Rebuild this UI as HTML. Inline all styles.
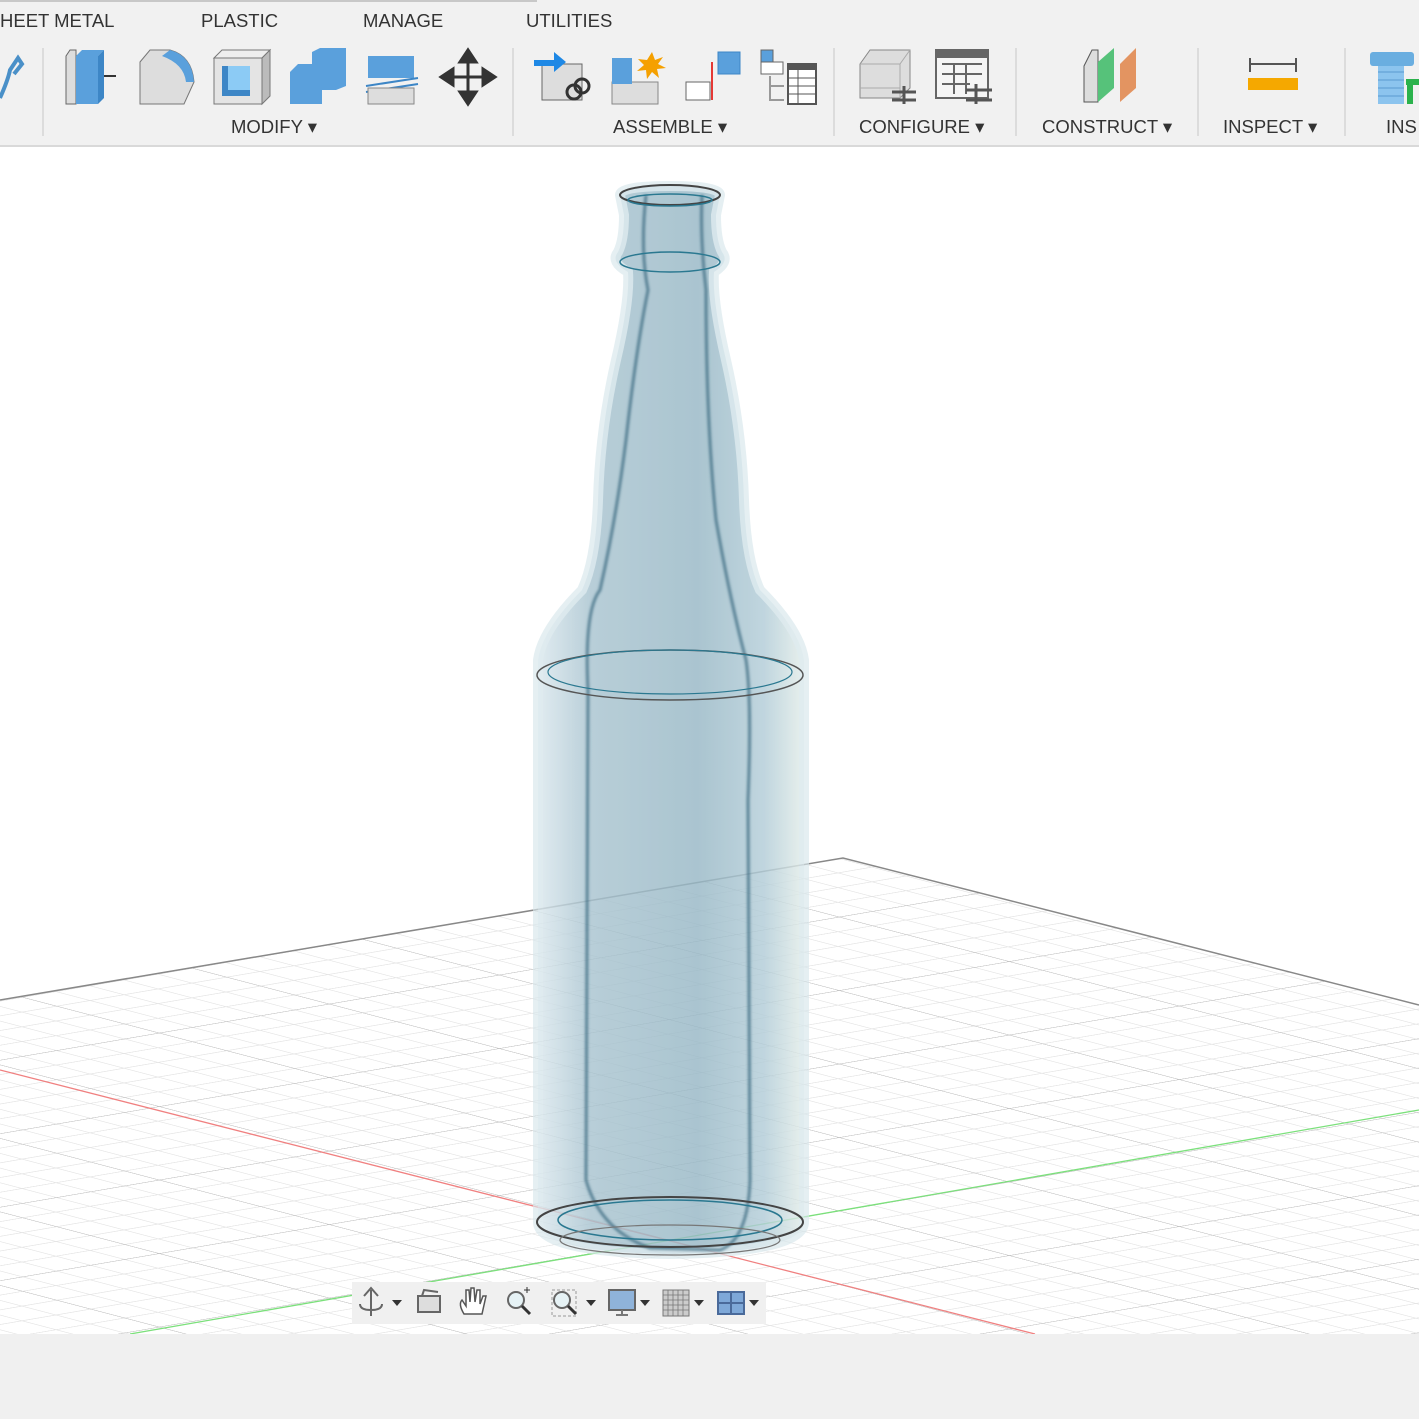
<!DOCTYPE html>
<html><head><meta charset="utf-8"><style>
html,body{margin:0;padding:0;width:1419px;height:1419px;overflow:hidden;background:#f0f0f0;font-family:"Liberation Sans",sans-serif}
#tb{position:absolute;left:0;top:0;width:1419px;height:145px;background:#f1f1f1;border-bottom:2px solid #d9d9d9}
.tab{position:absolute;top:10px;font-size:18.5px;color:#333}
.grp{position:absolute;top:116px;font-size:18.5px;color:#333}
.sep{position:absolute;top:48px;width:2px;height:88px;background:#dcdcdc}
#vp{position:absolute;left:0;top:147px;width:1419px;height:1187px;background:#fff;overflow:hidden}
#nav{position:absolute;left:352px;top:1282px;width:414px;height:42px;background:#f0f0f0}
</style></head><body>
<div id="tb">
<div style="position:absolute;left:0;top:0;width:537px;height:2px;background:#c8c8c8"></div>
<div class="tab" style="left:0">HEET METAL</div>
<div class="tab" style="left:201px">PLASTIC</div>
<div class="tab" style="left:363px">MANAGE</div>
<div class="tab" style="left:526px">UTILITIES</div>
<div class="grp" style="left:231px">MODIFY ▾</div>
<div class="grp" style="left:613px">ASSEMBLE ▾</div>
<div class="grp" style="left:859px">CONFIGURE ▾</div>
<div class="grp" style="left:1042px">CONSTRUCT ▾</div>
<div class="grp" style="left:1223px">INSPECT ▾</div>
<div class="grp" style="left:1386px">INS</div>
<div class="sep" style="left:42px"></div><div class="sep" style="left:512px"></div><div class="sep" style="left:833px"></div><div class="sep" style="left:1015px"></div><div class="sep" style="left:1197px"></div><div class="sep" style="left:1344px"></div>
<svg width="1419" height="110" style="position:absolute;left:0;top:0">
<path d="M0 98 Q8 80 10 70 L18 58 L22 64 L14 74" fill="none" stroke="#4a90c8" stroke-width="4"/>
<path d="M66 56 L70 50 L76 50 L76 104 L66 104Z" fill="#ddd" stroke="#666"/><path d="M76 56 L82 50 L104 50 L98 56Z M76 56 L98 56 L98 104 L76 104Z" fill="#5aa0dc"/><path d="M98 56 L104 50 L104 98 L98 104Z" fill="#3d86c6"/><path d="M104 76 L116 76" stroke="#333" stroke-width="2"/>
<path d="M140 62 L150 50 L170 50 Q192 56 194 82 L184 104 L140 104Z" fill="#ddd" stroke="#777"/><path d="M170 50 Q192 56 194 82 L186 82 Q184 64 162 56Z" fill="#5aa0dc"/>
<path d="M214 58 L222 50 L270 50 L262 58Z" fill="#eee" stroke="#777"/><rect x="214" y="58" width="48" height="46" fill="#e4e4e4" stroke="#777"/><path d="M262 58 L270 50 L270 96 L262 104Z" fill="#bbb" stroke="#777"/><rect x="222" y="66" width="28" height="30" fill="#8ccbf5"/><path d="M222 66 L228 66 L228 90 L250 90 L250 96 L222 96Z" fill="#3d86c6"/>
<path d="M290 72 L298 64 L312 64 L312 52 L320 48 L346 48 L346 86 L336 90 L322 90 L322 104 L290 104Z" fill="#5aa0dc"/>
<rect x="368" y="56" width="46" height="22" fill="#5aa0dc"/><path d="M366 86 L418 78 M366 92 L418 84" stroke="#3d86c6" stroke-width="2"/><rect x="368" y="88" width="46" height="16" fill="#ddd" stroke="#888"/>
<path d="M468 50 L476 62 L460 62Z M468 104 L476 92 L460 92Z M441 77 L453 69 L453 85Z M495 77 L483 69 L483 85Z M468 60 V94 M450 77 H486" fill="#333" stroke="#333" stroke-width="3"/>
<rect x="542" y="64" width="40" height="36" fill="#ddd" stroke="#666"/><path d="M534 60 H554 V52 L566 62 L554 72 V66 H534Z" fill="#1e88e5"/><circle cx="574" cy="92" r="7" fill="none" stroke="#333" stroke-width="3"/><circle cx="582" cy="86" r="7" fill="none" stroke="#333" stroke-width="3"/>
<rect x="612" y="82" width="46" height="22" fill="#ddd" stroke="#888"/><rect x="612" y="58" width="20" height="26" fill="#5aa0dc"/><path d="M652 52 l3 8 8-3-5 7 8 4-9 1 2 9-7-6-5 7-1-9-9 1 7-6-6-6 9 1z" fill="#f5a000"/>
<rect x="686" y="82" width="24" height="18" fill="#fff" stroke="#666"/><path d="M712 62 V100" stroke="#e53935" stroke-width="2"/><rect x="718" y="52" width="22" height="22" fill="#5aa0dc" stroke="#3d86c6"/>
<rect x="761" y="50" width="12" height="12" fill="#5aa0dc" stroke="#666"/><rect x="761" y="62" width="22" height="12" fill="#fff" stroke="#666"/><path d="M770 76 V100 H784 M770 86 H784" stroke="#999" stroke-width="2" fill="none"/><rect x="788" y="64" width="28" height="40" fill="#fff" stroke="#555" stroke-width="2"/><rect x="788" y="64" width="28" height="6" fill="#555"/><path d="M788 78H816M788 86H816M788 94H816M798 70V104" stroke="#555"/>
<path d="M860 64 L870 50 L910 50 L910 88 L900 98 L860 98Z" fill="#ddd" stroke="#888"/><path d="M900 98 V88 H860 M900 64 L910 50 M900 64 V98 M860 64 H900" fill="none" stroke="#aaa"/><path d="M892 92 H916 M892 100 H916 M904 86 V104" stroke="#555" stroke-width="3"/>
<rect x="936" y="50" width="52" height="48" fill="#f5f5f5" stroke="#666" stroke-width="2"/><rect x="936" y="50" width="52" height="8" fill="#666"/><path d="M942 64H982M942 74H982M942 84H970M954 64V94M966 64V94" stroke="#666" stroke-width="2"/><path d="M966 90H992M966 100H992M976 84V104" stroke="#555" stroke-width="3"/>
<path d="M1084 66 L1092 50 L1098 50 L1098 102 L1084 102Z" fill="#ddd" stroke="#555"/><path d="M1098 62 L1114 48 L1114 88 L1098 102Z" fill="#56c27a"/><path d="M1120 64 L1136 48 L1136 88 L1120 102Z" fill="#e39461"/>
<path d="M1250 64 H1296 M1250 58 V72 M1296 58 V72" stroke="#555" stroke-width="2"/><rect x="1248" y="78" width="50" height="12" fill="#f5a800"/>
<rect x="1370" y="52" width="44" height="14" rx="3" fill="#6aaee0"/><rect x="1378" y="66" width="26" height="38" fill="#8cc4ee"/><path d="M1378 72H1404M1378 80H1404M1378 88H1404M1378 96H1404" stroke="#5a9ad0"/><path d="M1406 82 H1419 M1410 84 V104" stroke="#2bb24c" stroke-width="6"/>
</svg>
</div>
<div id="vp">
<svg width="1419" height="1187" viewBox="0 147 1419 1187">
<defs>
<pattern id="g" patternUnits="userSpaceOnUse" width="5" height="5" patternTransform="matrix(34,-5.8,34,8.9,668,1240)">
<path d="M0 1H5M0 2H5M0 3H5M0 4H5M1 0V5M2 0V5M3 0V5M4 0V5" stroke="#e4e4e4" stroke-width="0.045" fill="none"/>
<path d="M0 0H5M0 0V5" stroke="#c2c2c2" stroke-width="0.08" fill="none"/>
</pattern>
<clipPath id="c"><path d="M0 1000 L843 858 L1419 1005 L1419 1334 L0 1334Z"/></clipPath>
<linearGradient id="bg" x1="0" x2="1"><stop offset="0" stop-color="#dbe8ee"/><stop offset="0.2" stop-color="#a9c4d0"/><stop offset="0.6" stop-color="#98b8c6"/><stop offset="0.85" stop-color="#b3cdd8"/><stop offset="1" stop-color="#e3ede9"/></linearGradient>
<filter id="bl"><feGaussianBlur stdDeviation="1.2"/></filter>
</defs>
<rect x="0" y="850" width="1419" height="490" fill="url(#g)" clip-path="url(#c)"/>
<path d="M0 1000 L843 858 L1419 1005" fill="none" stroke="#888" stroke-width="1.5"/>
<path d="M0 1070 L1035 1334" stroke="#f08080" stroke-width="1.3"/>
<path d="M130 1334 L1419 1110" stroke="#7be07b" stroke-width="1.3"/>
<path id="bo" d="M620 195 Q620 186 670 186 Q720 186 720 195 L716 215 Q716 240 722 252 Q730 262 714 272 Q712 300 726 360 Q742 430 744 500 Q746 560 760 590 Q800 630 804 660 L804 1222 Q804 1252 670 1254 Q538 1252 538 1222 L538 660 Q542 630 582 590 Q596 560 598 500 Q600 430 616 360 Q630 300 628 272 Q610 262 618 252 Q624 240 624 215Z" fill="url(#bg)" opacity="0.82" stroke="#d8e7ec" stroke-width="10" stroke-opacity="0.8"/>
<g filter="url(#bl)">
<path d="M646 195 Q640 250 648 290 Q636 350 626 440 Q616 520 600 590 Q584 610 588 690 L586 1180 Q600 1230 650 1248 L720 1250 Q748 1240 750 1180 L748 800 Q752 700 746 660 Q730 600 716 520 Q706 420 706 290 Q700 240 702 195" fill="none" stroke="#3a6a80" stroke-width="3" opacity="0.75"/>
</g>
<ellipse cx="670" cy="195" rx="50" ry="10" fill="none" stroke="#444" stroke-width="2"/>
<ellipse cx="670" cy="200" rx="42" ry="6" fill="none" stroke="#2a7890" stroke-width="1.5"/>
<ellipse cx="670" cy="262" rx="50" ry="10" fill="none" stroke="#2a7890" stroke-width="1.5"/>
<ellipse cx="670" cy="675" rx="133" ry="25" fill="none" stroke="#555" stroke-width="1.5"/>
<ellipse cx="670" cy="672" rx="122" ry="22" fill="none" stroke="#2a7890" stroke-width="1.2"/>
<ellipse cx="670" cy="1222" rx="133" ry="25" fill="none" stroke="#444" stroke-width="2"/>
<ellipse cx="670" cy="1220" rx="112" ry="20" fill="none" stroke="#2a7890" stroke-width="1.5"/>
<ellipse cx="670" cy="1240" rx="110" ry="15" fill="none" stroke="#777" stroke-width="1.2"/>
</svg>
</div>
<div id="nav">
<svg width="414" height="42">
<path d="M19 8 V34 M12 14 L19 6 L26 14 M8 22 Q8 28 19 28 Q30 28 30 22" fill="none" stroke="#666" stroke-width="2"/>
<path d="M40 18 h10 l-5 6z" fill="#333"/>
<rect x="66" y="14" width="22" height="16" fill="#ddd" stroke="#666" stroke-width="2"/><path d="M70 14 L72 8 L86 10" fill="none" stroke="#666" stroke-width="2"/>
<path d="M112 32 Q106 22 110 18 L114 24 L114 8 L117 8 L118 20 L119 6 L122 6 L123 20 L125 8 L128 8 L128 22 L131 14 L134 14 L130 32Z" fill="#fff" stroke="#555" stroke-width="1.5"/>
<circle cx="164" cy="18" r="8" fill="#e6f2f5" stroke="#666" stroke-width="2"/><path d="M170 24 L178 32" stroke="#333" stroke-width="3"/><path d="M172 8h6M175 5v6" stroke="#333"/>
<rect x="200" y="8" width="24" height="26" fill="none" stroke="#999" stroke-dasharray="3 2"/><circle cx="210" cy="18" r="8" fill="#e6f2f5" stroke="#666" stroke-width="2"/><path d="M216 24 L224 32" stroke="#333" stroke-width="3"/>
<path d="M234 18 h10 l-5 6z" fill="#333"/>
<rect x="257" y="8" width="26" height="20" fill="#8fb3da" stroke="#666" stroke-width="2"/><path d="M264 33 H276 M270 28 V33" stroke="#777" stroke-width="2"/>
<path d="M288 18 h10 l-5 6z" fill="#333"/>
<rect x="311" y="8" width="26" height="26" fill="#ccc" stroke="#777"/><path d="M311 13H337M311 18H337M311 23H337M311 28H337M316 8V34M321 8V34M326 8V34M331 8V34" stroke="#777" stroke-width="0.8"/>
<path d="M342 18 h10 l-5 6z" fill="#333"/>
<rect x="366" y="10" width="26" height="22" fill="#7ea8d8" stroke="#4a6a9a" stroke-width="2"/><path d="M379 10V32M366 21H392" stroke="#4a6a9a" stroke-width="2"/>
<path d="M397 18 h10 l-5 6z" fill="#333"/>
</svg>
</div>
</body></html>
